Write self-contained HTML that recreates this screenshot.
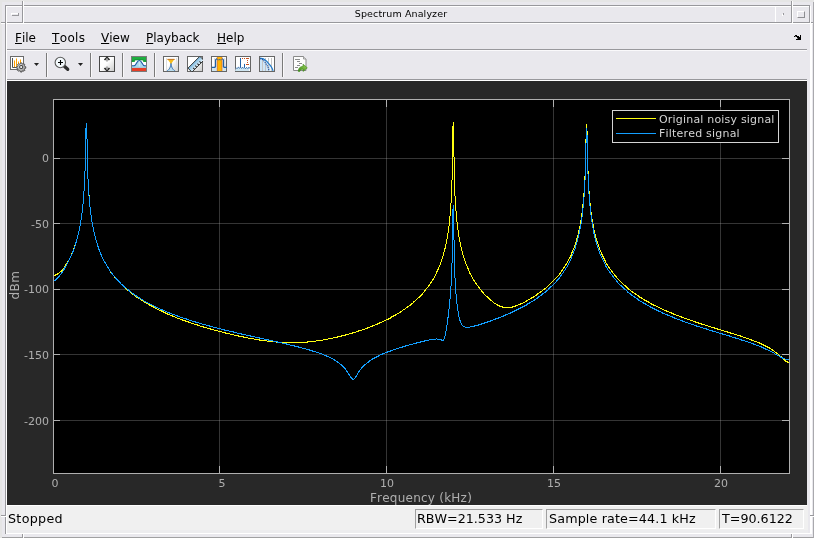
<!DOCTYPE html>
<html><head><meta charset="utf-8"><title>Spectrum Analyzer</title>
<style>
html,body{margin:0;padding:0}
body{width:814px;height:538px;overflow:hidden;position:relative;background:#e9e8ed;font-family:"DejaVu Sans","Liberation Sans",sans-serif;color:#000;font-kerning:none}
.a{position:absolute}
.g{position:absolute;background:#98989c}
.w{position:absolute;background:#fff}
.t{position:absolute;white-space:nowrap;line-height:1;will-change:transform}
.menu{font-size:12px;top:32px}
.menu u{text-decoration:underline;text-decoration-thickness:1px;text-underline-offset:1px}
.st{font-size:12.7px;top:512.5px}
.box{position:absolute;top:509px;height:20px;border:1px solid;border-color:#a0a0a0 #fff #fff #a0a0a0;box-sizing:border-box}
.sep{position:absolute;top:53px;height:24px;width:1px;background:#7a7a7a;box-shadow:1px 0 0 rgba(255,255,255,.7)}
.ic{position:absolute;top:56px;width:16px;height:16px}
.tk{will-change:transform;position:absolute;font-size:11px;color:#afafaf;line-height:1;white-space:nowrap}
</style></head><body>
<!-- outer frame -->
<div class="a" style="left:0;top:0;width:2px;height:538px;background:#e5e5e5"></div>
<div class="a" style="left:0;top:0;width:814px;height:2px;background:#e5e5e5"></div>
<!-- title bar lines -->
<div class="g" style="left:5px;top:5px;width:804px;height:1px"></div>
<div class="w" style="left:6px;top:6px;width:803px;height:1px"></div>
<div class="g" style="left:1px;top:22px;width:812px;height:1px"></div>
<div class="w" style="left:1px;top:23px;width:812px;height:1px"></div>
<div class="g" style="left:5px;top:5px;width:1px;height:529px"></div>
<div class="w" style="left:6px;top:6px;width:1px;height:528px"></div>
<div class="g" style="left:22px;top:1px;width:1px;height:22px"></div>
<div class="w" style="left:23px;top:1px;width:1px;height:22px"></div>
<div class="g" style="left:791px;top:1px;width:1px;height:22px"></div>
<div class="w" style="left:792px;top:1px;width:1px;height:22px"></div>
<div class="w" style="left:775px;top:6px;width:1px;height:16px"></div>
<div class="g" style="left:809px;top:5px;width:1px;height:18px"></div>
<div class="w" style="left:810px;top:6px;width:1px;height:17px"></div>
<div class="g" style="left:813px;top:2px;width:1px;height:536px;background:#a9a9ad"></div>
<div class="w" style="left:810px;top:24px;width:2px;height:510px"></div>
<!-- minimize btn -->
<div class="w" style="left:11px;top:13px;width:7px;height:1px"></div>
<div class="w" style="left:11px;top:13px;width:1px;height:2px"></div>
<div class="g" style="left:12px;top:15px;width:7px;height:1px"></div>
<div class="g" style="left:18px;top:13px;width:1px;height:3px"></div>
<!-- iconify dot -->
<div class="g" style="left:783px;top:13px;width:1px;height:2px"></div>
<div class="w" style="left:782px;top:14px;width:1px;height:2px"></div>
<!-- maximize -->
<div class="a" style="left:797px;top:11px;width:8px;height:7px;border:1px solid;border-color:#fff #8e8e92 #8e8e92 #fff;box-sizing:border-box"></div>
<div class="t" style="left:0;width:802px;text-align:center;top:8.7px;font-size:9.5px;letter-spacing:0.12px">Spectrum Analyzer</div>
<!-- menu -->
<div class="t menu" style="left:15px"><u>F</u>ile</div>
<div class="t menu" style="left:52px;letter-spacing:0.35px"><u>T</u>ools</div>
<div class="t menu" style="left:101px"><u>V</u>iew</div>
<div class="t menu" style="left:146px"><u>P</u>layback</div>
<div class="t menu" style="left:217px"><u>H</u>elp</div>
<svg class="a" style="left:790px;top:30px" width="16" height="14" viewBox="790 30 16 14" shape-rendering="crispEdges"><path d="M795 35h1v1h-1zM796 35h1v1h-1zM800 35h1v1h-1zM794 36h1v1h-1zM796 36h1v1h-1zM797 36h1v1h-1zM798 36h1v1h-1zM800 36h1v1h-1zM797 37h1v1h-1zM798 37h1v1h-1zM799 37h1v1h-1zM800 37h1v1h-1zM798 38h1v1h-1zM799 38h1v1h-1zM800 38h1v1h-1zM796 39h1v1h-1zM797 39h1v1h-1zM798 39h1v1h-1zM799 39h1v1h-1zM800 39h1v1h-1z" fill="#000"/><path d="M797 38h1v1h-1zM795 36h1v1h-1z" fill="#777"/></svg>
<div class="g" style="left:7px;top:49px;width:800px;height:1px"></div>
<div class="w" style="left:7px;top:50px;width:800px;height:1px;opacity:.75"></div>
<!-- toolbar -->
<div class="g" style="left:7px;top:79px;width:800px;height:1px"></div>
<div class="w" style="left:7px;top:80px;width:800px;height:1px"></div>
<div class="sep" style="left:46px"></div><div class="sep" style="left:90px"></div><div class="sep" style="left:122px"></div><div class="sep" style="left:154px"></div><div class="sep" style="left:282px"></div>
<svg class="a" style="left:0;top:50px" width="320" height="29" viewBox="0 50 320 29">
<defs>
<linearGradient id="gw" x1="0" y1="0" x2="1" y2="1"><stop offset="0.45" stop-color="#fff"/><stop offset="1" stop-color="#c8c8c8"/></linearGradient>
<linearGradient id="gb" x1="0" y1="0" x2="0" y2="1"><stop offset="0" stop-color="#7ab8e0"/><stop offset="1" stop-color="#e8f4fa"/></linearGradient>
<radialGradient id="gg" cx="0.4" cy="0.35" r="0.7"><stop offset="0" stop-color="#e8e8e8"/><stop offset="1" stop-color="#8a8a8a"/></radialGradient>
<linearGradient id="gr" x1="0" y1="1" x2="1" y2="0"><stop offset="0" stop-color="#3a8a18"/><stop offset="1" stop-color="#a4d65e"/></linearGradient>
<clipPath id="c6"><rect x="187.5" y="56.5" width="15.5" height="15.5"/></clipPath>
</defs>
<!-- 1: config -->
<rect x="10.5" y="56.5" width="13" height="13" fill="#fff" stroke="#6a6a6a"/>
<path d="M12.5 58v9.5H16" stroke="#555" fill="none"/>
<path d="M14.5 60.5V67M16.5 58.5V67M18.5 61.5V66M20.5 59.5V63" stroke="#ffa000" stroke-width="1"/>
<g transform="translate(21.2 67) scale(0.8)">
<path d="M-0.9 -5.1h1.8l.3 1.2 1.1 .5 1.1-.7 1.3 1.3-.7 1.1 .5 1.1 1.2 .3v1.8l-1.2 .3-.5 1.1 .7 1.1-1.3 1.3-1.1-.7-1.1 .5-.3 1.2h-1.8l-.3-1.2-1.1-.5-1.1 .7-1.3-1.3 .7-1.1-.5-1.1-1.2-.3v-1.8l1.2-.3 .5-1.1-.7-1.1 1.3-1.3 1.1 .7 1.1-.5z" fill="url(#gg)" stroke="#505050" stroke-width="1.2"/>
<circle r="2" fill="#f8f8f8" stroke="#3a3a3a" stroke-width="1.3"/>
</g>
<path d="M34 63h5l-2.5 3z" fill="#222"/>
<!-- 2: zoom -->
<path d="M64.600 66.500L67.700 69.300" stroke="#2e2e2e" stroke-width="3.300" stroke-linecap="round"/>
<circle cx="60.3" cy="62.5" r="5.2" fill="#f4fafd" stroke="#5a5a5a" stroke-width="1.1"/>
<path d="M58 62.5h5M60.5 60v5" stroke="#000" stroke-width="1.1"/>
<path d="M78 63h5l-2.5 3z" fill="#222"/>
<!-- 3: autoscale -->
<rect x="99.5" y="56.5" width="15" height="15" fill="url(#gw)" stroke="#484848"/>
<path d="M104.5 60l2.5-2.6 2.5 2.6M104.5 68l2.5 2.6 2.5-2.6" stroke="#2a2a2a" stroke-width="1.700" fill="none"/>
<path d="M107 58v3.6M107 66.4v3.6" stroke="#8a8a8a" stroke-width="1.4"/>
<!-- 4: mask -->
<rect x="131.5" y="56.5" width="15" height="15" fill="#fff" stroke="#7a7a7a"/>
<path d="M132 57h14v5h-2.800v-1.800h-8.400v1.800H132z" fill="#1fae40"/>
<path d="M132 62v-1.300h2.800v-1h8.400v1h2.800v1.300" fill="none" stroke="#128a30" stroke-width="0.6"/>
<path d="M132 65.800h2c2.400 0 2.600-5.300 5.300-5.300s2.900 5.300 5.300 5.300h1.400v2h-14z" fill="#a9d9ee"/>
<path d="M139.300 60.500v7" stroke="#e6f4fa" stroke-width="0.700"/>
<path d="M132 65.800h2c2.400 0 2.600-5.300 5.300-5.300s2.900 5.300 5.300 5.300h1.400" fill="none" stroke="#1d58a5" stroke-width="1.150"/>
<rect x="132" y="66.600" width="14" height="1.200" fill="#9fd4ec"/>
<rect x="132" y="67.900" width="14" height="3.100" fill="#e63e28"/>
<!-- 5: peak finder -->
<rect x="163.5" y="56.5" width="15" height="15" fill="url(#gw)" stroke="#666"/>
<path d="M166.500 58v13M176.500 58v13" stroke="#ddd"/>
<path d="M171 62.500c-.3 5-1.500 6.500-3.800 8.500h7.600c-2.300-2-3.500-3.500-3.800-8.500z" fill="#b8dcee"/>
<path d="M171 62.500c-.3 5-1.500 6.500-3.800 8.500M171 62.500c.3 5 1.500 6.500 3.800 8.500" fill="none" stroke="#2a68ac" stroke-width="0.9"/>
<path d="M167.400 59h7.200l-3.600 5z" fill="#f6bc1a"/>
<path d="M167.400 59.400h7.200" stroke="#c87a2a" stroke-width="1.100"/>
<!-- 6: ruler -->
<rect x="187.500" y="56.500" width="15" height="15" fill="url(#gw)" stroke="#666"/>
<g clip-path="url(#c6)"><g transform="translate(195.900 64.200) rotate(-45)">
<rect x="-8.400" y="-2.800" width="16.800" height="5.600" fill="url(#gb)" stroke="#2a2a2a" stroke-width="0.9"/>
<path d="M-4.500 2.800v-2.200M-1.500 2.800v-2.200M1.500 2.800v-2.200M4.500 2.800v-2.200" stroke="#222" stroke-width="1"/>
</g></g>
<!-- 7: channel -->
<rect x="211.500" y="56.500" width="15" height="15" fill="url(#gw)" stroke="#666"/>
<path d="M212 67.500h14v3.500h-14z" fill="#cfe6f2"/>
<path d="M214.500 58v12M224.500 58v12" stroke="#ddd"/>
<path d="M212 67.400h2.800l.8-1v-6.400l.9-1.200h1l1 1 1-1 1 1 1-1h1l.9 1.200v6.400l.8 1h2.800" fill="none" stroke="#2060a8" stroke-width="1.3"/>
<rect x="217.200" y="57" width="4.800" height="14" fill="#ffb400"/>
<path d="M217.300 57v14M221.900 57v14" stroke="#e07a20" stroke-width="0.9"/>
<path d="M217.400 59.200l1 1 1-1 1 1 1-1" fill="none" stroke="#2060a8" stroke-width="0.9"/>
<!-- 8: distortion -->
<rect x="235.500" y="56.500" width="15" height="15" fill="#fff" stroke="#666"/>
<path d="M236 68l1 .8 1.200-1.200 1 .8 1-1 .8 .8 1.200-.8 1 1 1.200-1.400 1 1.400 1.200-.8 1 .8 1.400-.6v3.200h-14z" fill="#cfe6f2"/>
<path d="M236 67.600l1 1 1.400-1.400 1.200 1 .9-.9v-9.300M240.500 67.300l1 1 1.200-1 1 1 .8-.8v-3.600M244.500 67.500l1 1 1.200-1 1 1 1.200-1 1 .6" fill="none" stroke="#2060a8" stroke-width="1"/>
<path d="M242 58.500h1M244 58.500h1M246 58.500h3M247 60.500h1M247 62.500h1M246 64.500h3" stroke="#c8501e" stroke-width="1.200"/>
<!-- 9: ccdf -->
<rect x="259.500" y="56.500" width="15" height="15" fill="#fff" stroke="#666"/>
<path d="M260 58c6 0 10.500 4 10.500 13h-10.500z" fill="#cfe6f8"/>
<path d="M262.500 58v13M265.500 58v13M268.500 58v13M271.500 58v13" stroke="#c4c4c4"/>
<path d="M260 58.200c2.500 0 4 .3 6.500 3s6 5.500 6.500 9.800" fill="none" stroke="#1e78c8" stroke-width="1.200"/>
<path d="M260 58.800c2 0 3.500 1 5 3.500s3.500 4.500 4 8.700" fill="none" stroke="#2050a0" stroke-width="1.100" stroke-dasharray="1.200 0.800"/>
<!-- 10: export doc -->
<path d="M293.500 56.500h10l2.500 2.500v11.500h-12.500z" fill="#fdfdfd" stroke="#8a8a8a"/>
<path d="M303.500 56.500v2.500h2.500" fill="#e0e0e0" stroke="#8a8a8a" stroke-width="0.8"/>
<path d="M295 59.500h5M297 61.500h3M299 63.500h3M297 65.500h3M295 67.500h3" stroke="#8c8c8c"/>
<path d="M298.300 71.400c0-3.500 2-5 4.700-5v-2.200l4.300 3.600-4.300 3.600v-2.200c-1.500 0-2.700.4-3.200 2.200z" fill="url(#gr)" stroke="#3a8a18" stroke-width="0.600"/>
</svg>


<!-- panel -->
<div class="a" style="left:7px;top:81px;width:800px;height:424px;background:#282828;overflow:hidden">
</div>
<svg class="a" style="left:0;top:0" width="814" height="538" viewBox="0 0 814 538" shape-rendering="crispEdges">
<rect x="53.5" y="99.5" width="736" height="374" fill="#000" stroke="#afafaf" stroke-width="1"/>
<g stroke="#afafaf" stroke-opacity="0.3" stroke-width="1">
<path d="M219.5 100V473M386.5 100V473M553.5 100V473M720.5 100V473"/>
<path d="M54 158.5H789M54 223.5H789M54 289.5H789M54 354.5H789M54 420.5H789"/>
</g>
<g stroke="#afafaf" stroke-width="1">
<path d="M219.5 466V473M386.5 466V473M553.5 466V473M720.5 466V473M219.5 100V107M386.5 100V107M553.5 100V107M720.5 100V107"/>
<path d="M54 158.5H60M54 223.5H60M54 289.5H60M54 354.5H60M54 420.5H60M782 158.5H789M782 223.5H789M782 289.5H789M782 354.5H789M782 420.5H789"/>
</g>
<path fill="#ffff11" d="M54 275h1v1h-1zM55 274h1v2h-1zM56 274h1v1h-1zM57 273h1v2h-1zM58 273h1v1h-1zM59 272h1v1h-1zM60 271h1v1h-1zM61 270h1v2h-1zM62 269h1v2h-1zM63 268h1v1h-1zM64 266h1v2h-1zM65 264h1v2h-1zM66 263h1v2h-1zM67 261h1v2h-1zM68 260h1v2h-1zM69 258h1v2h-1zM70 256h1v2h-1zM71 253h1v3h-1zM72 251h1v3h-1zM73 248h1v3h-1zM74 245h1v4h-1zM75 242h1v4h-1zM76 239h1v3h-1zM77 235h1v4h-1zM78 231h1v4h-1zM79 226h1v5h-1zM80 220h1v6h-1zM81 213h1v7h-1zM82 204h1v9h-1zM83 191h1v13h-1zM84 171h1v20h-1zM85 128h1v43h-1zM86 123h1v16h-1zM87 139h1v40h-1zM88 179h1v16h-1zM89 195h1v12h-1zM90 207h1v8h-1zM91 215h1v7h-1zM92 222h1v5h-1zM93 227h1v5h-1zM94 232h1v4h-1zM95 236h1v4h-1zM96 240h1v3h-1zM97 243h1v3h-1zM98 246h1v4h-1zM99 249h1v3h-1zM100 252h1v2h-1zM101 254h1v3h-1zM102 257h1v2h-1zM103 259h1v2h-1zM104 261h1v2h-1zM105 262h1v2h-1zM106 264h1v2h-1zM107 266h1v2h-1zM108 267h1v2h-1zM109 269h1v2h-1zM110 271h1v2h-1zM111 272h1v2h-1zM112 274h1v1h-1zM113 275h1v1h-1zM114 276h1v2h-1zM115 277h1v2h-1zM116 278h1v2h-1zM117 279h1v2h-1zM118 280h1v2h-1zM119 281h1v2h-1zM120 282h1v2h-1zM121 284h1v1h-1zM122 285h1v1h-1zM123 286h1v1h-1zM124 287h1v1h-1zM125 287h1v2h-1zM126 288h1v2h-1zM127 289h1v2h-1zM128 290h1v1h-1zM129 291h1v1h-1zM130 292h1v1h-1zM131 292h1v2h-1zM132 293h1v2h-1zM133 294h1v1h-1zM134 295h1v1h-1zM135 296h1v1h-1zM136 296h1v2h-1zM137 297h1v1h-1zM138 298h1v1h-1zM139 298h1v1h-1zM140 299h1v1h-1zM141 299h1v2h-1zM142 300h1v1h-1zM143 301h1v1h-1zM144 302h1v1h-1zM145 302h1v1h-1zM146 303h1v1h-1zM147 303h1v1h-1zM148 304h1v1h-1zM149 304h1v2h-1zM150 305h1v1h-1zM151 305h1v2h-1zM152 306h1v1h-1zM153 306h1v2h-1zM154 307h1v1h-1zM155 308h1v1h-1zM156 308h1v1h-1zM157 309h1v1h-1zM158 309h1v1h-1zM159 310h1v1h-1zM160 310h1v1h-1zM161 310h1v2h-1zM162 311h1v1h-1zM163 311h1v2h-1zM164 312h1v1h-1zM165 312h1v2h-1zM166 313h1v1h-1zM167 313h1v2h-1zM168 314h1v1h-1zM169 314h1v1h-1zM170 315h1v1h-1zM171 315h1v1h-1zM172 315h1v2h-1zM173 316h1v1h-1zM174 316h1v1h-1zM175 317h1v1h-1zM176 317h1v1h-1zM177 318h1v1h-1zM178 318h1v1h-1zM179 318h1v1h-1zM180 319h1v1h-1zM181 319h1v1h-1zM182 319h1v2h-1zM183 320h1v1h-1zM184 320h1v1h-1zM185 320h1v2h-1zM186 321h1v1h-1zM187 321h1v1h-1zM188 321h1v2h-1zM189 322h1v1h-1zM190 322h1v1h-1zM191 323h1v1h-1zM192 323h1v1h-1zM193 323h1v1h-1zM194 324h1v1h-1zM195 324h1v1h-1zM196 324h1v1h-1zM197 324h1v2h-1zM198 325h1v1h-1zM199 325h1v1h-1zM200 326h1v1h-1zM201 326h1v1h-1zM202 326h1v1h-1zM203 326h1v2h-1zM204 327h1v1h-1zM205 327h1v1h-1zM206 327h1v1h-1zM207 328h1v1h-1zM208 328h1v1h-1zM209 328h1v1h-1zM210 328h1v2h-1zM211 329h1v1h-1zM212 329h1v1h-1zM213 329h1v1h-1zM214 330h1v1h-1zM215 330h1v1h-1zM216 330h1v1h-1zM217 330h1v1h-1zM218 331h1v1h-1zM219 331h1v1h-1zM220 331h1v1h-1zM221 331h1v1h-1zM222 332h1v1h-1zM223 332h1v1h-1zM224 332h1v1h-1zM225 332h1v2h-1zM226 333h1v1h-1zM227 333h1v1h-1zM228 333h1v1h-1zM229 333h1v1h-1zM230 334h1v1h-1zM231 334h1v1h-1zM232 334h1v1h-1zM233 334h1v1h-1zM234 335h1v1h-1zM235 335h1v1h-1zM236 335h1v1h-1zM237 335h1v1h-1zM238 335h1v2h-1zM239 336h1v1h-1zM240 336h1v1h-1zM241 336h1v1h-1zM242 336h1v1h-1zM243 336h1v2h-1zM244 337h1v1h-1zM245 337h1v1h-1zM246 337h1v1h-1zM247 337h1v1h-1zM248 338h1v1h-1zM249 338h1v1h-1zM250 338h1v1h-1zM251 338h1v1h-1zM252 338h1v1h-1zM253 338h1v1h-1zM254 339h1v1h-1zM255 339h1v1h-1zM256 339h1v1h-1zM257 339h1v1h-1zM258 339h1v1h-1zM259 339h1v2h-1zM260 340h1v1h-1zM261 340h1v1h-1zM262 340h1v1h-1zM263 340h1v1h-1zM264 340h1v1h-1zM265 340h1v1h-1zM266 340h1v1h-1zM267 341h1v1h-1zM268 341h1v1h-1zM269 341h1v1h-1zM270 341h1v1h-1zM271 341h1v1h-1zM272 341h1v1h-1zM273 341h1v1h-1zM274 341h1v1h-1zM275 341h1v1h-1zM276 342h1v1h-1zM277 342h1v1h-1zM278 342h1v1h-1zM279 342h1v1h-1zM280 342h1v1h-1zM281 342h1v1h-1zM282 342h1v1h-1zM283 342h1v1h-1zM284 342h1v1h-1zM285 342h1v1h-1zM286 342h1v1h-1zM287 342h1v1h-1zM288 342h1v1h-1zM289 342h1v1h-1zM290 342h1v1h-1zM291 342h1v1h-1zM292 342h1v1h-1zM293 342h1v1h-1zM294 342h1v1h-1zM295 342h1v1h-1zM296 342h1v1h-1zM297 342h1v1h-1zM298 342h1v1h-1zM299 342h1v1h-1zM300 342h1v1h-1zM301 342h1v1h-1zM302 342h1v1h-1zM303 342h1v1h-1zM304 342h1v1h-1zM305 342h1v1h-1zM306 342h1v1h-1zM307 341h1v2h-1zM308 341h1v1h-1zM309 341h1v1h-1zM310 341h1v1h-1zM311 341h1v1h-1zM312 341h1v1h-1zM313 341h1v1h-1zM314 341h1v1h-1zM315 341h1v1h-1zM316 340h1v1h-1zM317 340h1v1h-1zM318 340h1v1h-1zM319 340h1v1h-1zM320 340h1v1h-1zM321 340h1v1h-1zM322 340h1v1h-1zM323 339h1v1h-1zM324 339h1v1h-1zM325 339h1v1h-1zM326 339h1v1h-1zM327 339h1v1h-1zM328 338h1v1h-1zM329 338h1v1h-1zM330 338h1v1h-1zM331 338h1v1h-1zM332 338h1v1h-1zM333 337h1v1h-1zM334 337h1v1h-1zM335 337h1v1h-1zM336 337h1v1h-1zM337 336h1v2h-1zM338 336h1v1h-1zM339 336h1v1h-1zM340 336h1v1h-1zM341 335h1v2h-1zM342 335h1v1h-1zM343 335h1v1h-1zM344 335h1v1h-1zM345 334h1v2h-1zM346 334h1v1h-1zM347 334h1v1h-1zM348 334h1v1h-1zM349 333h1v1h-1zM350 333h1v1h-1zM351 333h1v1h-1zM352 332h1v2h-1zM353 332h1v1h-1zM354 332h1v1h-1zM355 332h1v1h-1zM356 331h1v1h-1zM357 331h1v1h-1zM358 330h1v2h-1zM359 330h1v1h-1zM360 330h1v1h-1zM361 330h1v1h-1zM362 329h1v1h-1zM363 329h1v1h-1zM364 329h1v1h-1zM365 328h1v1h-1zM366 328h1v1h-1zM367 327h1v2h-1zM368 327h1v1h-1zM369 327h1v1h-1zM370 326h1v1h-1zM371 326h1v1h-1zM372 325h1v2h-1zM373 325h1v1h-1zM374 325h1v1h-1zM375 324h1v1h-1zM376 324h1v1h-1zM377 323h1v2h-1zM378 323h1v1h-1zM379 322h1v2h-1zM380 322h1v1h-1zM381 322h1v1h-1zM382 321h1v1h-1zM383 321h1v1h-1zM384 320h1v1h-1zM385 320h1v1h-1zM386 319h1v1h-1zM387 319h1v1h-1zM388 318h1v2h-1zM389 318h1v1h-1zM390 317h1v2h-1zM391 316h1v2h-1zM392 316h1v1h-1zM393 315h1v2h-1zM394 315h1v1h-1zM395 314h1v2h-1zM396 314h1v1h-1zM397 313h1v1h-1zM398 313h1v1h-1zM399 312h1v1h-1zM400 311h1v2h-1zM401 311h1v1h-1zM402 310h1v1h-1zM403 309h1v1h-1zM404 309h1v1h-1zM405 308h1v1h-1zM406 307h1v1h-1zM407 306h1v2h-1zM408 306h1v1h-1zM409 305h1v1h-1zM410 304h1v2h-1zM411 303h1v2h-1zM412 303h1v1h-1zM413 301h1v2h-1zM414 301h1v1h-1zM415 300h1v1h-1zM416 299h1v1h-1zM417 298h1v1h-1zM418 297h1v1h-1zM419 296h1v2h-1zM420 295h1v2h-1zM421 294h1v2h-1zM422 293h1v2h-1zM423 292h1v1h-1zM424 290h1v2h-1zM425 289h1v2h-1zM426 288h1v1h-1zM427 287h1v1h-1zM428 285h1v2h-1zM429 284h1v2h-1zM430 282h1v2h-1zM431 281h1v2h-1zM432 279h1v2h-1zM433 278h1v2h-1zM434 276h1v2h-1zM435 274h1v2h-1zM436 271h1v3h-1zM437 269h1v3h-1zM438 267h1v3h-1zM439 265h1v2h-1zM440 262h1v3h-1zM441 259h1v3h-1zM442 256h1v3h-1zM443 252h1v4h-1zM444 248h1v4h-1zM445 244h1v5h-1zM446 239h1v5h-1zM447 233h1v6h-1zM448 226h1v7h-1zM449 216h1v10h-1zM450 203h1v13h-1zM451 180h1v23h-1zM452 126h1v54h-1zM453 122h1v35h-1zM454 157h1v39h-1zM455 196h1v15h-1zM456 211h1v11h-1zM457 222h1v8h-1zM458 230h1v7h-1zM459 237h1v5h-1zM460 242h1v5h-1zM461 247h1v4h-1zM462 251h1v4h-1zM463 255h1v3h-1zM464 258h1v3h-1zM465 261h1v3h-1zM466 264h1v2h-1zM467 266h1v3h-1zM468 268h1v3h-1zM469 271h1v3h-1zM470 273h1v2h-1zM471 275h1v2h-1zM472 277h1v2h-1zM473 279h1v2h-1zM474 280h1v2h-1zM475 282h1v2h-1zM476 283h1v2h-1zM477 285h1v1h-1zM478 286h1v2h-1zM479 287h1v2h-1zM480 289h1v1h-1zM481 290h1v2h-1zM482 291h1v2h-1zM483 292h1v2h-1zM484 294h1v1h-1zM485 295h1v1h-1zM486 296h1v1h-1zM487 296h1v2h-1zM488 297h1v2h-1zM489 298h1v2h-1zM490 299h1v2h-1zM491 300h1v1h-1zM492 301h1v1h-1zM493 302h1v1h-1zM494 303h1v1h-1zM495 303h1v1h-1zM496 304h1v1h-1zM497 304h1v2h-1zM498 305h1v1h-1zM499 305h1v2h-1zM500 306h1v1h-1zM501 306h1v1h-1zM502 306h1v2h-1zM503 307h1v1h-1zM504 307h1v1h-1zM505 307h1v1h-1zM506 307h1v1h-1zM507 307h1v1h-1zM508 307h1v1h-1zM509 307h1v1h-1zM510 307h1v1h-1zM511 307h1v1h-1zM512 306h1v2h-1zM513 306h1v1h-1zM514 306h1v1h-1zM515 305h1v2h-1zM516 305h1v1h-1zM517 305h1v1h-1zM518 304h1v1h-1zM519 304h1v1h-1zM520 303h1v2h-1zM521 303h1v1h-1zM522 303h1v1h-1zM523 302h1v1h-1zM524 302h1v1h-1zM525 301h1v1h-1zM526 300h1v2h-1zM527 300h1v1h-1zM528 299h1v1h-1zM529 299h1v1h-1zM530 298h1v1h-1zM531 297h1v2h-1zM532 297h1v1h-1zM533 296h1v2h-1zM534 296h1v1h-1zM535 295h1v1h-1zM536 294h1v2h-1zM537 293h1v2h-1zM538 293h1v1h-1zM539 292h1v1h-1zM540 291h1v2h-1zM541 291h1v1h-1zM542 290h1v1h-1zM543 289h1v1h-1zM544 288h1v2h-1zM545 288h1v1h-1zM546 287h1v1h-1zM547 286h1v1h-1zM548 285h1v1h-1zM549 284h1v1h-1zM550 283h1v1h-1zM551 282h1v1h-1zM552 281h1v1h-1zM553 280h1v1h-1zM554 279h1v1h-1zM555 278h1v1h-1zM556 277h1v1h-1zM557 276h1v1h-1zM558 275h1v1h-1zM559 273h1v2h-1zM560 272h1v2h-1zM561 270h1v2h-1zM562 269h1v2h-1zM563 267h1v2h-1zM564 266h1v2h-1zM565 264h1v2h-1zM566 263h1v2h-1zM567 261h1v2h-1zM568 259h1v2h-1zM569 257h1v2h-1zM570 255h1v3h-1zM571 252h1v4h-1zM572 250h1v3h-1zM573 248h1v2h-1zM574 245h1v3h-1zM575 242h1v3h-1zM576 238h1v4h-1zM577 235h1v3h-1zM578 230h1v5h-1zM579 226h1v4h-1zM580 220h1v6h-1zM581 213h1v7h-1zM582 204h1v10h-1zM583 193h1v12h-1zM584 176h1v17h-1zM585 139h1v37h-1zM586 124h1v15h-1zM587 131h1v40h-1zM588 171h1v20h-1zM589 191h1v12h-1zM590 203h1v9h-1zM591 212h1v7h-1zM592 219h1v6h-1zM593 224h1v6h-1zM594 230h1v4h-1zM595 234h1v4h-1zM596 238h1v3h-1zM597 241h1v3h-1zM598 244h1v3h-1zM599 247h1v3h-1zM600 250h1v2h-1zM601 252h1v3h-1zM602 254h1v3h-1zM603 256h1v3h-1zM604 258h1v3h-1zM605 260h1v3h-1zM606 263h1v2h-1zM607 264h1v2h-1zM608 266h1v2h-1zM609 267h1v2h-1zM610 269h1v1h-1zM611 270h1v2h-1zM612 271h1v2h-1zM613 273h1v1h-1zM614 274h1v2h-1zM615 275h1v2h-1zM616 276h1v2h-1zM617 278h1v1h-1zM618 279h1v1h-1zM619 280h1v1h-1zM620 281h1v1h-1zM621 282h1v1h-1zM622 283h1v1h-1zM623 284h1v1h-1zM624 285h1v1h-1zM625 285h1v2h-1zM626 286h1v2h-1zM627 287h1v2h-1zM628 288h1v2h-1zM629 289h1v1h-1zM630 290h1v1h-1zM631 291h1v1h-1zM632 291h1v2h-1zM633 292h1v1h-1zM634 293h1v1h-1zM635 293h1v2h-1zM636 294h1v1h-1zM637 295h1v1h-1zM638 295h1v2h-1zM639 296h1v2h-1zM640 297h1v1h-1zM641 297h1v2h-1zM642 298h1v1h-1zM643 299h1v1h-1zM644 299h1v2h-1zM645 300h1v1h-1zM646 300h1v2h-1zM647 301h1v1h-1zM648 301h1v2h-1zM649 302h1v1h-1zM650 303h1v1h-1zM651 303h1v2h-1zM652 304h1v1h-1zM653 304h1v2h-1zM654 305h1v1h-1zM655 305h1v1h-1zM656 306h1v1h-1zM657 306h1v1h-1zM658 307h1v1h-1zM659 307h1v1h-1zM660 308h1v1h-1zM661 308h1v1h-1zM662 309h1v1h-1zM663 309h1v1h-1zM664 310h1v1h-1zM665 310h1v1h-1zM666 310h1v2h-1zM667 311h1v1h-1zM668 311h1v1h-1zM669 312h1v1h-1zM670 312h1v1h-1zM671 312h1v2h-1zM672 313h1v1h-1zM673 313h1v2h-1zM674 314h1v1h-1zM675 314h1v1h-1zM676 315h1v1h-1zM677 315h1v1h-1zM678 315h1v1h-1zM679 316h1v1h-1zM680 316h1v1h-1zM681 316h1v2h-1zM682 317h1v1h-1zM683 317h1v1h-1zM684 318h1v1h-1zM685 318h1v1h-1zM686 318h1v1h-1zM687 319h1v1h-1zM688 319h1v1h-1zM689 319h1v1h-1zM690 320h1v1h-1zM691 320h1v1h-1zM692 320h1v1h-1zM693 321h1v1h-1zM694 321h1v1h-1zM695 321h1v2h-1zM696 322h1v1h-1zM697 322h1v1h-1zM698 322h1v2h-1zM699 323h1v1h-1zM700 323h1v1h-1zM701 323h1v2h-1zM702 324h1v1h-1zM703 324h1v1h-1zM704 324h1v1h-1zM705 325h1v1h-1zM706 325h1v1h-1zM707 325h1v1h-1zM708 326h1v1h-1zM709 326h1v1h-1zM710 326h1v1h-1zM711 327h1v1h-1zM712 327h1v1h-1zM713 327h1v1h-1zM714 327h1v2h-1zM715 328h1v1h-1zM716 328h1v1h-1zM717 328h1v2h-1zM718 329h1v1h-1zM719 329h1v1h-1zM720 329h1v1h-1zM721 330h1v1h-1zM722 330h1v1h-1zM723 330h1v1h-1zM724 331h1v1h-1zM725 331h1v1h-1zM726 331h1v1h-1zM727 331h1v2h-1zM728 332h1v1h-1zM729 332h1v1h-1zM730 332h1v2h-1zM731 333h1v1h-1zM732 333h1v1h-1zM733 333h1v1h-1zM734 334h1v1h-1zM735 334h1v1h-1zM736 334h1v1h-1zM737 335h1v1h-1zM738 335h1v1h-1zM739 335h1v1h-1zM740 335h1v2h-1zM741 336h1v1h-1zM742 336h1v1h-1zM743 337h1v1h-1zM744 337h1v1h-1zM745 337h1v1h-1zM746 338h1v1h-1zM747 338h1v1h-1zM748 338h1v1h-1zM749 339h1v1h-1zM750 339h1v1h-1zM751 339h1v2h-1zM752 340h1v1h-1zM753 340h1v1h-1zM754 341h1v1h-1zM755 341h1v1h-1zM756 341h1v1h-1zM757 342h1v1h-1zM758 342h1v1h-1zM759 342h1v2h-1zM760 343h1v1h-1zM761 343h1v2h-1zM762 344h1v1h-1zM763 344h1v2h-1zM764 345h1v1h-1zM765 345h1v2h-1zM766 346h1v1h-1zM767 346h1v2h-1zM768 347h1v1h-1zM769 347h1v2h-1zM770 348h1v1h-1zM771 349h1v1h-1zM772 349h1v2h-1zM773 350h1v1h-1zM774 351h1v1h-1zM775 352h1v1h-1zM776 352h1v2h-1zM777 353h1v1h-1zM778 354h1v1h-1zM779 355h1v1h-1zM780 356h1v1h-1zM781 356h1v2h-1zM782 357h1v2h-1zM783 358h1v2h-1zM784 359h1v2h-1zM785 360h1v2h-1zM786 361h1v1h-1zM787 361h1v2h-1zM788 362h1v1h-1z"/>
<path fill="#139fff" d="M54 280h1v1h-1zM55 279h1v2h-1zM56 278h1v2h-1zM57 277h1v2h-1zM58 276h1v2h-1zM59 275h1v2h-1zM60 274h1v1h-1zM61 272h1v2h-1zM62 271h1v2h-1zM63 269h1v2h-1zM64 267h1v3h-1zM65 266h1v2h-1zM66 264h1v2h-1zM67 262h1v2h-1zM68 260h1v2h-1zM69 258h1v2h-1zM70 256h1v2h-1zM71 254h1v2h-1zM72 251h1v3h-1zM73 249h1v3h-1zM74 246h1v3h-1zM75 242h1v4h-1zM76 239h1v4h-1zM77 235h1v4h-1zM78 231h1v4h-1zM79 226h1v5h-1zM80 220h1v6h-1zM81 213h1v7h-1zM82 204h1v9h-1zM83 191h1v13h-1zM84 171h1v20h-1zM85 128h1v43h-1zM86 123h1v16h-1zM87 139h1v40h-1zM88 179h1v17h-1zM89 196h1v11h-1zM90 207h1v8h-1zM91 215h1v7h-1zM92 222h1v5h-1zM93 227h1v5h-1zM94 232h1v4h-1zM95 236h1v4h-1zM96 240h1v3h-1zM97 243h1v4h-1zM98 246h1v4h-1zM99 249h1v3h-1zM100 252h1v3h-1zM101 254h1v3h-1zM102 257h1v2h-1zM103 259h1v2h-1zM104 261h1v2h-1zM105 262h1v2h-1zM106 264h1v2h-1zM107 266h1v2h-1zM108 267h1v2h-1zM109 269h1v2h-1zM110 271h1v1h-1zM111 272h1v2h-1zM112 273h1v2h-1zM113 275h1v1h-1zM114 276h1v1h-1zM115 277h1v2h-1zM116 278h1v2h-1zM117 279h1v2h-1zM118 280h1v2h-1zM119 281h1v2h-1zM120 282h1v2h-1zM121 284h1v1h-1zM122 284h1v2h-1zM123 285h1v2h-1zM124 286h1v2h-1zM125 287h1v1h-1zM126 288h1v1h-1zM127 289h1v1h-1zM128 289h1v2h-1zM129 290h1v2h-1zM130 291h1v1h-1zM131 292h1v1h-1zM132 293h1v1h-1zM133 293h1v2h-1zM134 294h1v1h-1zM135 295h1v1h-1zM136 295h1v2h-1zM137 296h1v1h-1zM138 297h1v1h-1zM139 297h1v2h-1zM140 298h1v1h-1zM141 299h1v1h-1zM142 299h1v1h-1zM143 300h1v1h-1zM144 301h1v1h-1zM145 301h1v1h-1zM146 302h1v1h-1zM147 302h1v1h-1zM148 303h1v1h-1zM149 303h1v1h-1zM150 304h1v1h-1zM151 304h1v1h-1zM152 305h1v1h-1zM153 305h1v1h-1zM154 306h1v1h-1zM155 306h1v2h-1zM156 307h1v1h-1zM157 307h1v1h-1zM158 308h1v1h-1zM159 308h1v1h-1zM160 309h1v1h-1zM161 309h1v1h-1zM162 309h1v2h-1zM163 310h1v1h-1zM164 310h1v1h-1zM165 311h1v1h-1zM166 311h1v1h-1zM167 312h1v1h-1zM168 312h1v1h-1zM169 312h1v2h-1zM170 313h1v1h-1zM171 313h1v1h-1zM172 314h1v1h-1zM173 314h1v1h-1zM174 314h1v1h-1zM175 315h1v1h-1zM176 315h1v1h-1zM177 315h1v2h-1zM178 316h1v1h-1zM179 316h1v1h-1zM180 317h1v1h-1zM181 317h1v1h-1zM182 317h1v1h-1zM183 318h1v1h-1zM184 318h1v1h-1zM185 318h1v1h-1zM186 318h1v2h-1zM187 319h1v1h-1zM188 319h1v1h-1zM189 320h1v1h-1zM190 320h1v1h-1zM191 320h1v1h-1zM192 321h1v1h-1zM193 321h1v1h-1zM194 321h1v1h-1zM195 321h1v2h-1zM196 322h1v1h-1zM197 322h1v1h-1zM198 322h1v1h-1zM199 323h1v1h-1zM200 323h1v1h-1zM201 323h1v1h-1zM202 324h1v1h-1zM203 324h1v1h-1zM204 324h1v1h-1zM205 324h1v1h-1zM206 325h1v1h-1zM207 325h1v1h-1zM208 325h1v1h-1zM209 325h1v2h-1zM210 326h1v1h-1zM211 326h1v1h-1zM212 326h1v1h-1zM213 327h1v1h-1zM214 327h1v1h-1zM215 327h1v1h-1zM216 327h1v1h-1zM217 328h1v1h-1zM218 328h1v1h-1zM219 328h1v1h-1zM220 328h1v1h-1zM221 329h1v1h-1zM222 329h1v1h-1zM223 329h1v1h-1zM224 329h1v2h-1zM225 330h1v1h-1zM226 330h1v1h-1zM227 330h1v1h-1zM228 330h1v1h-1zM229 331h1v1h-1zM230 331h1v1h-1zM231 331h1v1h-1zM232 331h1v1h-1zM233 331h1v2h-1zM234 332h1v1h-1zM235 332h1v1h-1zM236 332h1v1h-1zM237 333h1v1h-1zM238 333h1v1h-1zM239 333h1v1h-1zM240 333h1v1h-1zM241 333h1v2h-1zM242 334h1v1h-1zM243 334h1v1h-1zM244 334h1v1h-1zM245 334h1v1h-1zM246 335h1v1h-1zM247 335h1v1h-1zM248 335h1v1h-1zM249 335h1v1h-1zM250 335h1v2h-1zM251 336h1v1h-1zM252 336h1v1h-1zM253 336h1v1h-1zM254 336h1v1h-1zM255 337h1v1h-1zM256 337h1v1h-1zM257 337h1v1h-1zM258 337h1v1h-1zM259 337h1v2h-1zM260 338h1v1h-1zM261 338h1v1h-1zM262 338h1v1h-1zM263 338h1v1h-1zM264 339h1v1h-1zM265 339h1v1h-1zM266 339h1v1h-1zM267 339h1v1h-1zM268 339h1v2h-1zM269 340h1v1h-1zM270 340h1v1h-1zM271 340h1v1h-1zM272 340h1v1h-1zM273 341h1v1h-1zM274 341h1v1h-1zM275 341h1v1h-1zM276 341h1v1h-1zM277 341h1v2h-1zM278 342h1v1h-1zM279 342h1v1h-1zM280 342h1v1h-1zM281 342h1v1h-1zM282 343h1v1h-1zM283 343h1v1h-1zM284 343h1v1h-1zM285 343h1v1h-1zM286 343h1v2h-1zM287 344h1v1h-1zM288 344h1v1h-1zM289 344h1v1h-1zM290 345h1v1h-1zM291 345h1v1h-1zM292 345h1v1h-1zM293 345h1v1h-1zM294 345h1v2h-1zM295 346h1v1h-1zM296 346h1v1h-1zM297 346h1v1h-1zM298 346h1v2h-1zM299 347h1v1h-1zM300 347h1v1h-1zM301 347h1v1h-1zM302 348h1v1h-1zM303 348h1v1h-1zM304 348h1v1h-1zM305 348h1v1h-1zM306 349h1v1h-1zM307 349h1v1h-1zM308 349h1v1h-1zM309 349h1v2h-1zM310 350h1v1h-1zM311 350h1v1h-1zM312 350h1v2h-1zM313 351h1v1h-1zM314 351h1v1h-1zM315 351h1v1h-1zM316 352h1v1h-1zM317 352h1v1h-1zM318 352h1v1h-1zM319 353h1v1h-1zM320 353h1v1h-1zM321 353h1v1h-1zM322 354h1v1h-1zM323 354h1v1h-1zM324 355h1v1h-1zM325 355h1v1h-1zM326 355h1v2h-1zM327 356h1v1h-1zM328 356h1v1h-1zM329 357h1v1h-1zM330 357h1v1h-1zM331 358h1v1h-1zM332 358h1v1h-1zM333 359h1v1h-1zM334 359h1v2h-1zM335 360h1v1h-1zM336 361h1v1h-1zM337 361h1v2h-1zM338 362h1v1h-1zM339 363h1v1h-1zM340 364h1v1h-1zM341 364h1v2h-1zM342 365h1v2h-1zM343 366h1v2h-1zM344 367h1v2h-1zM345 368h1v2h-1zM346 370h1v2h-1zM347 371h1v2h-1zM348 373h1v2h-1zM349 374h1v2h-1zM350 376h1v2h-1zM351 377h1v2h-1zM352 378h1v2h-1zM353 379h1v1h-1zM354 378h1v1h-1zM355 376h1v2h-1zM356 375h1v2h-1zM357 373h1v2h-1zM358 371h1v2h-1zM359 370h1v2h-1zM360 369h1v1h-1zM361 367h1v2h-1zM362 366h1v2h-1zM363 365h1v2h-1zM364 364h1v2h-1zM365 364h1v1h-1zM366 363h1v1h-1zM367 362h1v1h-1zM368 361h1v2h-1zM369 360h1v2h-1zM370 360h1v1h-1zM371 359h1v1h-1zM372 358h1v2h-1zM373 358h1v1h-1zM374 357h1v2h-1zM375 357h1v1h-1zM376 356h1v2h-1zM377 356h1v1h-1zM378 355h1v2h-1zM379 355h1v1h-1zM380 354h1v1h-1zM381 354h1v1h-1zM382 353h1v2h-1zM383 353h1v1h-1zM384 353h1v1h-1zM385 352h1v1h-1zM386 352h1v1h-1zM387 351h1v2h-1zM388 351h1v1h-1zM389 351h1v1h-1zM390 350h1v2h-1zM391 350h1v1h-1zM392 350h1v1h-1zM393 349h1v1h-1zM394 349h1v1h-1zM395 349h1v1h-1zM396 348h1v1h-1zM397 348h1v1h-1zM398 348h1v1h-1zM399 347h1v1h-1zM400 347h1v1h-1zM401 347h1v1h-1zM402 346h1v2h-1zM403 346h1v1h-1zM404 346h1v1h-1zM405 345h1v2h-1zM406 345h1v1h-1zM407 345h1v1h-1zM408 345h1v1h-1zM409 344h1v1h-1zM410 344h1v1h-1zM411 344h1v1h-1zM412 344h1v1h-1zM413 343h1v1h-1zM414 343h1v1h-1zM415 343h1v1h-1zM416 342h1v2h-1zM417 342h1v1h-1zM418 342h1v1h-1zM419 342h1v1h-1zM420 341h1v2h-1zM421 341h1v1h-1zM422 341h1v1h-1zM423 341h1v1h-1zM424 340h1v2h-1zM425 340h1v1h-1zM426 340h1v1h-1zM427 340h1v1h-1zM428 340h1v1h-1zM429 339h1v1h-1zM430 339h1v1h-1zM431 339h1v1h-1zM432 339h1v1h-1zM433 339h1v1h-1zM434 339h1v1h-1zM435 339h1v1h-1zM436 338h1v1h-1zM437 339h1v1h-1zM438 339h1v1h-1zM439 339h1v1h-1zM440 339h1v1h-1zM441 339h1v2h-1zM442 340h1v1h-1zM443 339h1v2h-1zM444 336h1v3h-1zM445 331h1v5h-1zM446 325h1v6h-1zM447 317h1v8h-1zM448 309h1v9h-1zM449 299h1v10h-1zM450 286h1v13h-1zM451 263h1v23h-1zM452 209h1v54h-1zM453 205h1v35h-1zM454 240h1v38h-1zM455 278h1v16h-1zM456 294h1v10h-1zM457 304h1v7h-1zM458 311h1v6h-1zM459 317h1v4h-1zM460 320h1v3h-1zM461 323h1v2h-1zM462 325h1v1h-1zM463 326h1v1h-1zM464 326h1v1h-1zM465 327h1v1h-1zM466 327h1v1h-1zM467 327h1v1h-1zM468 327h1v1h-1zM469 327h1v1h-1zM470 326h1v1h-1zM471 326h1v1h-1zM472 326h1v1h-1zM473 326h1v1h-1zM474 325h1v2h-1zM475 325h1v1h-1zM476 325h1v1h-1zM477 325h1v1h-1zM478 324h1v2h-1zM479 324h1v1h-1zM480 324h1v1h-1zM481 323h1v2h-1zM482 323h1v1h-1zM483 323h1v1h-1zM484 322h1v2h-1zM485 322h1v1h-1zM486 322h1v1h-1zM487 321h1v2h-1zM488 321h1v1h-1zM489 321h1v1h-1zM490 320h1v2h-1zM491 320h1v1h-1zM492 320h1v1h-1zM493 319h1v1h-1zM494 319h1v1h-1zM495 318h1v2h-1zM496 318h1v1h-1zM497 318h1v1h-1zM498 317h1v2h-1zM499 317h1v1h-1zM500 317h1v1h-1zM501 316h1v1h-1zM502 316h1v1h-1zM503 315h1v2h-1zM504 315h1v1h-1zM505 314h1v2h-1zM506 314h1v1h-1zM507 314h1v1h-1zM508 313h1v1h-1zM509 313h1v1h-1zM510 312h1v2h-1zM511 312h1v1h-1zM512 311h1v2h-1zM513 311h1v1h-1zM514 310h1v2h-1zM515 310h1v1h-1zM516 309h1v2h-1zM517 309h1v1h-1zM518 308h1v2h-1zM519 308h1v1h-1zM520 307h1v2h-1zM521 307h1v1h-1zM522 306h1v2h-1zM523 306h1v1h-1zM524 305h1v2h-1zM525 305h1v1h-1zM526 304h1v2h-1zM527 303h1v2h-1zM528 303h1v1h-1zM529 302h1v2h-1zM530 302h1v1h-1zM531 301h1v1h-1zM532 301h1v1h-1zM533 300h1v1h-1zM534 299h1v2h-1zM535 299h1v1h-1zM536 298h1v1h-1zM537 297h1v2h-1zM538 296h1v2h-1zM539 296h1v1h-1zM540 295h1v1h-1zM541 294h1v2h-1zM542 293h1v2h-1zM543 293h1v1h-1zM544 292h1v1h-1zM545 291h1v2h-1zM546 290h1v2h-1zM547 290h1v1h-1zM548 288h1v2h-1zM549 287h1v2h-1zM550 286h1v2h-1zM551 286h1v1h-1zM552 285h1v1h-1zM553 284h1v1h-1zM554 283h1v1h-1zM555 282h1v1h-1zM556 280h1v2h-1zM557 279h1v2h-1zM558 278h1v2h-1zM559 277h1v2h-1zM560 275h1v2h-1zM561 274h1v2h-1zM562 273h1v1h-1zM563 271h1v2h-1zM564 270h1v1h-1zM565 268h1v2h-1zM566 267h1v1h-1zM567 265h1v2h-1zM568 263h1v2h-1zM569 261h1v2h-1zM570 259h1v2h-1zM571 256h1v3h-1zM572 254h1v2h-1zM573 251h1v3h-1zM574 249h1v2h-1zM575 245h1v4h-1zM576 242h1v3h-1zM577 238h1v4h-1zM578 234h1v4h-1zM579 229h1v5h-1zM580 224h1v5h-1zM581 217h1v7h-1zM582 208h1v9h-1zM583 197h1v11h-1zM584 180h1v17h-1zM585 143h1v37h-1zM586 128h1v15h-1zM587 135h1v39h-1zM588 174h1v20h-1zM589 194h1v12h-1zM590 206h1v9h-1zM591 215h1v7h-1zM592 222h1v6h-1zM593 228h1v6h-1zM594 233h1v5h-1zM595 238h1v4h-1zM596 241h1v4h-1zM597 245h1v3h-1zM598 248h1v3h-1zM599 251h1v3h-1zM600 254h1v2h-1zM601 256h1v2h-1zM602 258h1v2h-1zM603 260h1v2h-1zM604 262h1v2h-1zM605 264h1v3h-1zM606 266h1v2h-1zM607 268h1v2h-1zM608 270h1v1h-1zM609 271h1v2h-1zM610 272h1v2h-1zM611 274h1v1h-1zM612 275h1v2h-1zM613 276h1v2h-1zM614 278h1v1h-1zM615 279h1v1h-1zM616 280h1v2h-1zM617 281h1v2h-1zM618 283h1v1h-1zM619 284h1v1h-1zM620 285h1v1h-1zM621 285h1v2h-1zM622 286h1v2h-1zM623 287h1v2h-1zM624 288h1v2h-1zM625 289h1v1h-1zM626 290h1v1h-1zM627 291h1v2h-1zM628 292h1v1h-1zM629 293h1v1h-1zM630 293h1v2h-1zM631 294h1v2h-1zM632 295h1v1h-1zM633 296h1v1h-1zM634 296h1v2h-1zM635 297h1v1h-1zM636 298h1v1h-1zM637 298h1v2h-1zM638 299h1v2h-1zM639 300h1v1h-1zM640 301h1v1h-1zM641 301h1v1h-1zM642 302h1v1h-1zM643 302h1v2h-1zM644 303h1v1h-1zM645 303h1v2h-1zM646 304h1v1h-1zM647 305h1v1h-1zM648 305h1v1h-1zM649 306h1v1h-1zM650 306h1v2h-1zM651 307h1v1h-1zM652 307h1v2h-1zM653 308h1v1h-1zM654 308h1v2h-1zM655 309h1v1h-1zM656 309h1v2h-1zM657 310h1v1h-1zM658 310h1v2h-1zM659 311h1v1h-1zM660 311h1v1h-1zM661 312h1v1h-1zM662 312h1v2h-1zM663 313h1v1h-1zM664 313h1v1h-1zM665 314h1v1h-1zM666 314h1v1h-1zM667 314h1v2h-1zM668 315h1v1h-1zM669 315h1v1h-1zM670 316h1v1h-1zM671 316h1v1h-1zM672 316h1v2h-1zM673 317h1v1h-1zM674 317h1v2h-1zM675 318h1v1h-1zM676 318h1v1h-1zM677 319h1v1h-1zM678 319h1v1h-1zM679 319h1v1h-1zM680 320h1v1h-1zM681 320h1v1h-1zM682 320h1v2h-1zM683 321h1v1h-1zM684 321h1v1h-1zM685 322h1v1h-1zM686 322h1v1h-1zM687 322h1v1h-1zM688 323h1v1h-1zM689 323h1v1h-1zM690 323h1v1h-1zM691 324h1v1h-1zM692 324h1v1h-1zM693 324h1v1h-1zM694 325h1v1h-1zM695 325h1v1h-1zM696 325h1v2h-1zM697 326h1v1h-1zM698 326h1v1h-1zM699 326h1v1h-1zM700 327h1v1h-1zM701 327h1v1h-1zM702 327h1v1h-1zM703 328h1v1h-1zM704 328h1v1h-1zM705 328h1v1h-1zM706 328h1v2h-1zM707 329h1v1h-1zM708 329h1v1h-1zM709 330h1v1h-1zM710 330h1v1h-1zM711 330h1v1h-1zM712 330h1v2h-1zM713 331h1v1h-1zM714 331h1v1h-1zM715 331h1v1h-1zM716 332h1v1h-1zM717 332h1v1h-1zM718 332h1v1h-1zM719 333h1v1h-1zM720 333h1v1h-1zM721 333h1v1h-1zM722 333h1v2h-1zM723 334h1v1h-1zM724 334h1v1h-1zM725 334h1v1h-1zM726 335h1v1h-1zM727 335h1v1h-1zM728 335h1v1h-1zM729 335h1v2h-1zM730 336h1v1h-1zM731 336h1v1h-1zM732 337h1v1h-1zM733 337h1v1h-1zM734 337h1v1h-1zM735 337h1v2h-1zM736 338h1v1h-1zM737 338h1v1h-1zM738 338h1v1h-1zM739 339h1v1h-1zM740 339h1v1h-1zM741 339h1v2h-1zM742 340h1v1h-1zM743 340h1v1h-1zM744 340h1v1h-1zM745 341h1v1h-1zM746 341h1v1h-1zM747 341h1v1h-1zM748 342h1v1h-1zM749 342h1v1h-1zM750 342h1v1h-1zM751 343h1v1h-1zM752 343h1v1h-1zM753 343h1v2h-1zM754 344h1v1h-1zM755 344h1v1h-1zM756 345h1v1h-1zM757 345h1v1h-1zM758 345h1v1h-1zM759 346h1v1h-1zM760 346h1v1h-1zM761 346h1v2h-1zM762 347h1v1h-1zM763 347h1v2h-1zM764 348h1v1h-1zM765 348h1v2h-1zM766 349h1v1h-1zM767 349h1v1h-1zM768 350h1v1h-1zM769 350h1v1h-1zM770 351h1v1h-1zM771 351h1v1h-1zM772 352h1v1h-1zM773 352h1v1h-1zM774 353h1v1h-1zM775 354h1v1h-1zM776 354h1v1h-1zM777 355h1v1h-1zM778 355h1v1h-1zM779 356h1v1h-1zM780 356h1v2h-1zM781 357h1v1h-1zM782 357h1v2h-1zM783 358h1v1h-1zM784 358h1v1h-1zM785 359h1v1h-1zM786 359h1v1h-1zM787 359h1v1h-1zM788 359h1v1h-1z"/>
<rect x="612.5" y="110.5" width="166" height="32" fill="#000" stroke="#d4d4d4"/>
<path d="M616 118.5H656" stroke="#ffff11"/><path d="M616 133.5H656" stroke="#139fff"/>
</svg>
<div class="tk" style="left:659px;top:114px;color:#d4d4d4;letter-spacing:0.19px">Original noisy signal</div>
<div class="tk" style="left:659px;top:128px;color:#d4d4d4;letter-spacing:0.2px">Filtered signal</div>
<div class="tk" style="left:9px;width:40px;text-align:right;top:153px">0</div>
<div class="tk" style="left:9px;width:40px;text-align:right;top:219px">-50</div>
<div class="tk" style="left:9px;width:40px;text-align:right;top:284px">-100</div>
<div class="tk" style="left:9px;width:40px;text-align:right;top:350px">-150</div>
<div class="tk" style="left:9px;width:40px;text-align:right;top:416px">-200</div>
<div class="tk" style="left:34.5px;width:40px;text-align:center;top:478px">0</div>
<div class="tk" style="left:201.500px;width:40px;text-align:center;top:478px">5</div>
<div class="tk" style="left:367px;width:40px;text-align:center;top:478px">10</div>
<div class="tk" style="left:534px;width:40px;text-align:center;top:478px">15</div>
<div class="tk" style="left:701px;width:40px;text-align:center;top:478px">20</div>
<div class="a" style="left:7px;top:81px;width:800px;height:424px;overflow:hidden"><div class="tk" style="left:314px;width:200px;text-align:center;top:411px;font-size:12px;letter-spacing:0.24px">Frequency (kHz)</div></div>
<div class="tk" style="left:-15px;top:278.5px;width:60px;text-align:center;transform:rotate(-90deg);font-size:12px;letter-spacing:0.5px">dBm</div>
<!-- status bar -->
<div class="a" style="left:7px;top:505px;width:801px;height:28px;background:#ececee"></div><div class="a" style="left:7px;top:505px;width:801px;height:25px;background:#f0f0f0"></div>
<div class="w" style="left:7px;top:505px;width:800px;height:1px"></div>
<div class="t st" style="left:8px;letter-spacing:0.3px">Stopped</div>
<div class="box" style="left:415px;width:128px"></div><div class="t st" style="left:417px">RBW=21.533 Hz</div>
<div class="box" style="left:546px;width:170px"></div><div class="t st" style="left:548.5px;letter-spacing:0.15px">Sample rate=44.1 kHz</div>
<div class="box" style="left:719px;width:85px"></div><div class="t st" style="left:721.5px">T=90.6122</div>
<!-- bottom frame -->
<div class="w" style="left:6px;top:533px;width:804px;height:1px"></div>
<div class="g" style="left:2px;top:537px;width:811px;height:1px;background:#a0a0a2"></div>
<div class="g" style="left:1px;top:515px;width:5px;height:1px"></div><div class="w" style="left:1px;top:516px;width:5px;height:1px"></div>
<div class="g" style="left:810px;top:515px;width:4px;height:1px"></div><div class="w" style="left:810px;top:516px;width:4px;height:1px"></div>
<div class="g" style="left:22px;top:534px;width:1px;height:4px"></div><div class="w" style="left:23px;top:534px;width:1px;height:4px"></div>
<div class="g" style="left:791px;top:534px;width:1px;height:4px"></div><div class="w" style="left:792px;top:534px;width:1px;height:4px"></div>
</body></html>
